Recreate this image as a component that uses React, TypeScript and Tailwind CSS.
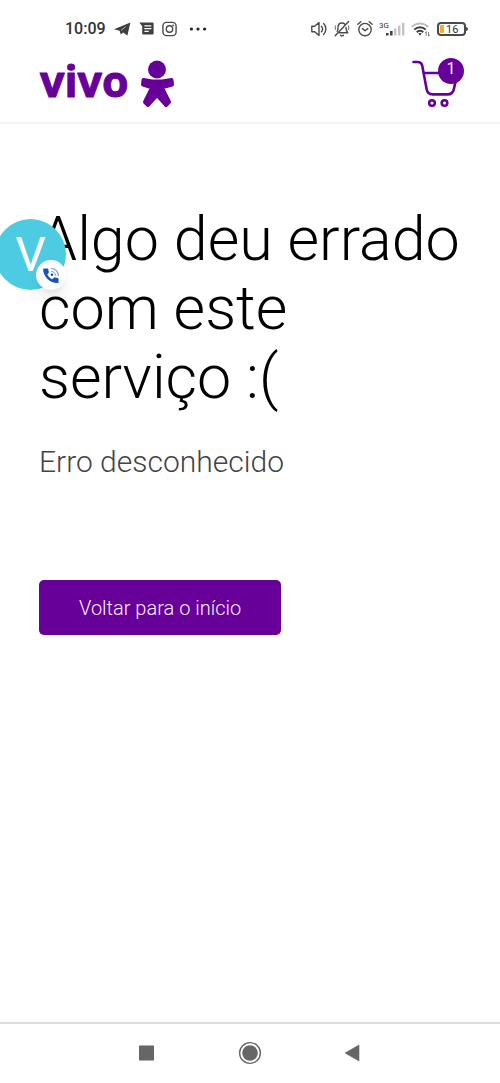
function TelegramIcon() {
  return (
    <svg width="17" height="16" viewBox="0 0 17 16" fill="#3f3f3f" aria-hidden="true">
      <path d="M0 8.2 16.4 1.4 13.4 14.6 9.2 11.6 6.8 13.4 5.6 9.8Z" />
      <path d="m7 9.6 4.6-4" fill="none" stroke="#fff" strokeWidth=".6" />
    </svg>
  );
}

function MessageIcon() {
  return (
    <svg width="15" height="16" viewBox="0 0 15 16" aria-hidden="true">
      <path d="M.3 1.6h13.3a1 1 0 0 1 1 1v10a1 1 0 0 1-1 1H4.2a1 1 0 0 1-1-1V5.2Z" fill="#3f3f3f" />
      <path d="M5.4 4.9h7M5.4 7.6h7M5.4 10.3h4.4" stroke="#fff" strokeWidth="1.3" />
    </svg>
  );
}

function InstagramIcon() {
  return (
    <svg width="15" height="16" viewBox="0 0 15 16" fill="none" stroke="#4a4a4a" aria-hidden="true">
      <rect x=".9" y="1.4" width="13.2" height="13.2" rx="3.6" strokeWidth="1.4" />
      <circle cx="7.5" cy="8" r="3.2" strokeWidth="1.4" />
      <circle cx="11.2" cy="4.3" r=".9" fill="#4a4a4a" stroke="none" />
    </svg>
  );
}

function DotsIcon() {
  return (
    <svg width="18" height="16" viewBox="0 0 18 16" fill="#222" aria-hidden="true">
      <circle cx="2.4" cy="8" r="1.6" />
      <circle cx="9" cy="8" r="1.6" />
      <circle cx="15.6" cy="8" r="1.6" />
    </svg>
  );
}

function VolumeIcon() {
  return (
    <svg width="16" height="18" viewBox="0 0 16 18" fill="none" stroke="#4a4a4a" strokeWidth="1.4" strokeLinejoin="round" strokeLinecap="round" aria-hidden="true">
      <path d="M.8 6.2h2.8L8 2.6v12.8l-4.4-3.6H.8Z" />
      <path d="M10.4 6.2c1.4 1.6 1.4 4 0 5.6M12.6 3.6c3 3 3 7.8 0 10.8" />
    </svg>
  );
}

function BellOffIcon() {
  return (
    <svg width="18" height="18" viewBox="0 0 18 18" fill="none" stroke="#4a4a4a" strokeWidth="1.4" strokeLinecap="round" strokeLinejoin="round" aria-hidden="true">
      <path d="M4.2 11.4c.8-1 .8-2.4.8-3.8C5 4.8 6.6 3 9 3c1.2 0 2.2.4 2.9 1.2M13 7.4c0 2 .2 3.6 1.8 5.4H6.4" />
      <path d="M7.6 15.2c.8.9 2 .9 2.8 0M15.6 1.6 2.2 15.8" />
      <path d="M2.6 5.8c-.6 1.2-.6 2.4 0 3.6M15.4 5.8c.6 1.2.6 2.4 0 3.6" strokeWidth="1" />
    </svg>
  );
}

function AlarmIcon() {
  return (
    <svg width="16" height="18" viewBox="0 0 16 18" fill="none" stroke="#4a4a4a" strokeWidth="1.4" strokeLinecap="round" strokeLinejoin="round" aria-hidden="true">
      <circle cx="8" cy="9.6" r="6.2" />
      <path d="m5.4 8.6 2.6 2.2 2.8-2.2M.9 4.2 3.8 1.8M15.1 4.2l-2.9-2.4" />
    </svg>
  );
}

function SignalIcon() {
  return (
    <svg width="19" height="14" viewBox="0 0 19 14" className="-ml-[3px]" aria-hidden="true">
      <path d="M0 11h2.6v2.5H0ZM4 9h2.6v4.5H4Z" fill="#444" />
      <path d="M8 6.4h2.4v7.1H8ZM12 3.6h2.4v9.9H12ZM16 .8h2.4v12.7H16Z" fill="#c4c4c4" />
    </svg>
  );
}

function WifiIcon() {
  return (
    <svg width="20" height="18" viewBox="0 0 20 18" fill="none" strokeWidth="2" aria-hidden="true">
      <path d="M.8 7C5.4 2.2 12.6 2.2 17.2 7" stroke="#bdbdbd" />
      <path d="M3.3 9.6c3.2-3.3 8.2-3.3 11.4 0M5.8 12.2c1.8-1.9 4.6-1.9 6.4 0" stroke="#3f3f3f" />
      <path d="m9 15.6-1.8-1.9c1-1 2.6-1 3.6 0Z" fill="#3f3f3f" />
      <path d="M15.2 15.8v-4.2l-1 1.2M17.6 12v4.2l1-1.2" stroke="#666" strokeWidth=".9" />
    </svg>
  );
}

function Battery({ level }: { level: number }) {
  return (
    <div className="flex items-center">
      <div className="flex h-[14px] w-[29px] items-center gap-[2px] rounded-[4px] border-2 border-[#4a4a4a] pl-px">
        <span className="h-2 w-1 rounded-[1px] bg-[#f6a93b]" />
        <span className="text-[11px] leading-none text-[#333]">{level}</span>
      </div>
      <span className="h-1 w-[2px] rounded-r-sm bg-[#4a4a4a]" />
    </div>
  );
}

function StatusBar() {
  return (
    <div className="flex items-center justify-between pt-[19px] pr-8 pl-[65px]">
      <div className="flex h-5 items-center gap-2">
        <span className="text-base leading-5 font-medium text-[#333]">10:09</span>
        <TelegramIcon />
        <MessageIcon />
        <InstagramIcon />
        <span className="pl-1">
          <DotsIcon />
        </span>
      </div>
      <div className="flex h-5 items-center gap-[6px]">
        <VolumeIcon />
        <BellOffIcon />
        <AlarmIcon />
        <div className="flex items-start">
          <span className="text-[8px] leading-none text-[#333]">3G</span>
          <SignalIcon />
        </div>
        <WifiIcon />
        <Battery level={16} />
      </div>
    </div>
  );
}

function VivoLogo() {
  return (
    <svg width="136" height="50" viewBox="0 0 136 50" fill="#660099" className="overflow-visible" role="img" aria-label="vivo">
      <text
        x="1"
        y="39"
        fontSize="43"
        fontWeight="700"
        stroke="#660099"
        strokeWidth="1"
        strokeLinejoin="round"
        className="font-['Open_Sans',sans-serif]"
      >
        vivo
      </text>
      <circle cx="118" cy="11.5" r="9" />
      <path
        d="M104.500 22 113 23.500h10l9.500-1.500.5 4.500-9 2.500v3l6 12-3 3-9-10-9 10-3-3 6-12v-3l-8-2.500Z"
        stroke="#660099"
        strokeWidth="4"
        strokeLinejoin="round"
      />
    </svg>
  );
}

function CartButton({ count }: { count: number }) {
  return (
    <button type="button" aria-label="Carrinho" className="relative cursor-pointer">
      <svg width="52" height="50" viewBox="0 0 52 50" fill="none" stroke="#660099" strokeWidth="2.6" strokeLinecap="round" aria-hidden="true">
        <path d="M1.5 4h4c3 0 4.3 1.4 4.8 4l4.3 23c.6 3.6 2.4 5.4 6 5.4h14.8c3.6 0 5.6-1.6 6.4-5l2-9" />
        <path d="M12 15h22" />
        <circle cx="20" cy="45" r="2.8" />
        <circle cx="32.5" cy="45" r="2.8" />
      </svg>
      <span className="absolute top-0 right-0 flex size-[26px] items-center justify-center rounded-full bg-[#660099] pb-1 text-base leading-none text-white">
        {count}
      </span>
    </button>
  );
}

function CallBubble() {
  return (
    <button
      type="button"
      aria-label="Chamada em andamento"
      className="absolute top-[219px] -left-[5px] flex size-[71px] cursor-pointer items-center justify-center rounded-full bg-[#4dcbe3] text-5xl text-white"
    >
      V
      <span className="absolute right-0 bottom-0 flex size-[30px] items-center justify-center rounded-full bg-white shadow-lg">
        <svg width="17" height="17" viewBox="0 0 17 17" aria-hidden="true">
          <path
            d="M1 1.4h3.4c.5 0 .8.3.9.8l.5 2.9c.1.4 0 .7-.3.9L4.300 7.400c1.200 2.200 2.700 3.700 4.900 4.900l1.700-1.600c.3-.3.6-.4 1-.3l2.800.6c.5.1.8.4.8.9v3.300c0 .6-.4.9-1 .9C6.8 16.1.5 9.8.1 2.3c0-.5.4-.9.9-.9Z"
            fill="#1552c0"
          />
          <path d="M8 1.500c4.300 0 7.400 3.100 7.400 7.400" fill="none" stroke="#7f9bd6" strokeWidth="1.2" />
          <path d="M8.200 4.500c2.700 0 4.300 1.600 4.300 4.300" fill="none" stroke="#7f9bd6" strokeWidth="1" />
          <circle cx="9" cy="7.800" r="1.3" fill="#1552c0" />
        </svg>
      </span>
    </button>
  );
}

function NavigationBar() {
  return (
    <nav className="flex h-[61px] items-center justify-center gap-[82px] border-t-2 border-[#dcdcdc] pb-0.5 text-[#666]">
      <button type="button" aria-label="Recentes" className="cursor-pointer">
        <svg width="18" height="24" viewBox="0 0 18 24" fill="currentColor">
          <rect x="1" y="4.5" width="15" height="15" rx=".5" />
        </svg>
      </button>
      <button type="button" aria-label="Início" className="cursor-pointer">
        <svg width="24" height="24" viewBox="0 0 24 24" fill="currentColor">
          <circle cx="12" cy="12" r="7.8" />
          <circle cx="12" cy="12" r="10.4" fill="none" stroke="currentColor" strokeWidth="1.4" />
        </svg>
      </button>
      <button type="button" aria-label="Voltar" className="cursor-pointer">
        <svg width="18" height="24" viewBox="0 0 18 24" fill="currentColor">
          <path d="M1 12 15 4v16Z" stroke="currentColor" strokeWidth=".6" strokeLinejoin="round" />
        </svg>
      </button>
    </nav>
  );
}

export default function App() {
  return (
    <div className="relative flex min-h-screen flex-col bg-white font-['Roboto',sans-serif]">
      <StatusBar />
      <header className="flex items-center justify-between border-b-2 border-[#f3f3f3] pt-[19px] pr-9 pb-[14px] pl-[39px]">
        <VivoLogo />
        <CartButton count={1} />
      </header>

      <main className="flex-1 px-[39px] pt-[81px]">
        <h1 className="text-[61px] leading-[69px] font-light text-black">
          Algo deu errado com este serviço :(
        </h1>
        <p className="mt-8 text-[30px] leading-9 font-light text-[#444]">
          Erro desconhecido
        </p>
        <button
          type="button"
          className="mt-[100px] h-[55px] cursor-pointer rounded-[5px] bg-[#660099] px-10 text-xl font-light text-[#fbeeff]"
        >
          Voltar para o início
        </button>
      </main>

      <NavigationBar />
      <CallBubble />
    </div>
  );
}
